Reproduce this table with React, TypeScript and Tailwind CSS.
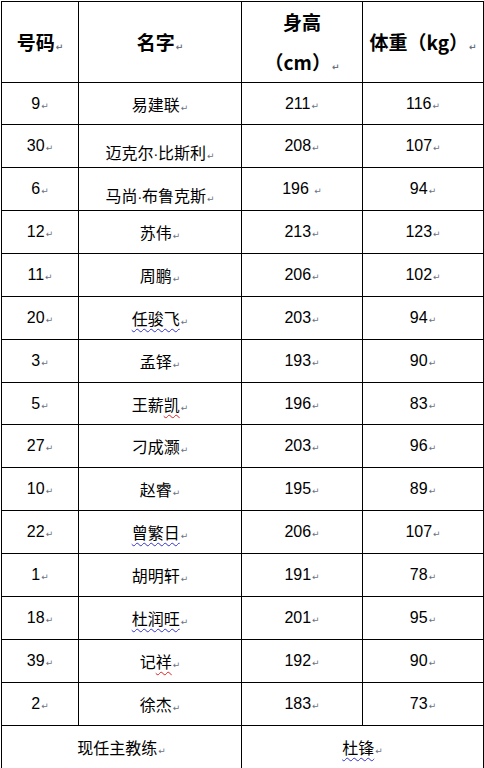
const players = [
  { no: "9", name: "易建联", height: "211", weight: "116" },
  { no: "30", name: "迈克尔·比斯利", height: "208", weight: "107", low: true },
  { no: "6", name: "马尚·布鲁克斯", height: "196 ", weight: "94", low: true },
  { no: "12", name: "苏伟", height: "213", weight: "123" },
  { no: "11", name: "周鹏", height: "206", weight: "102" },
  { no: "20", name: "任骏飞", height: "203", weight: "94", blue: "任骏飞" },
  { no: "3", name: "孟铎", height: "193", weight: "90" },
  { no: "5", name: "王薪凯", height: "196", weight: "83", red: "凯" },
  { no: "27", name: "刁成灏", height: "203", weight: "96" },
  { no: "10", name: "赵睿", height: "195", weight: "89" },
  { no: "22", name: "曾繁日", height: "206", weight: "107", blue: "曾繁日" },
  { no: "1", name: "胡明轩", height: "191", weight: "78" },
  { no: "18", name: "杜润旺", height: "201", weight: "95", blue: "杜润旺" },
  { no: "39", name: "记祥", height: "192", weight: "90", red: "祥" },
  { no: "2", name: "徐杰", height: "183", weight: "73" },
];

const cjk = "font-['Noto_Sans_CJK_SC',sans-serif]";
const num = "font-['Liberation_Sans','Noto_Sans_CJK_SC',sans-serif]";
const cell = "border border-black text-center align-middle p-0";
const wavyBlue = "underline decoration-wavy decoration-[#3333cc] decoration-1 underline-offset-[3px]";
const wavyRed = "underline decoration-wavy decoration-[#e02020] decoration-1 underline-offset-[3px]";

function Mark() {
  return (
    <span className="ml-px inline-block align-baseline text-[9px] leading-none text-gray-500 font-['DejaVu_Sans',sans-serif]">
      ↵
    </span>
  );
}

function Dotted({ text }: { text: string }) {
  const parts = text.split("·");
  return (
    <>
      {parts.map((part, i) => (
        <span key={i}>
          {i > 0 && <span className="font-['Liberation_Sans',sans-serif] text-[14px]">·</span>}
          {part}
        </span>
      ))}
    </>
  );
}

function Name({ name, blue, red }: { name: string; blue?: string; red?: string }) {
  if (blue) {
    return <span className={wavyBlue}>{name}</span>;
  }
  if (red) {
    const head = name.slice(0, name.length - red.length);
    return (
      <span>
        {head}
        <span className={wavyRed}>{red}</span>
      </span>
    );
  }
  return <Dotted text={name} />;
}

export default function App() {
  return (
    <div className="min-h-screen bg-white pl-px pt-px">
      <table className="border-collapse table-fixed w-[482px] text-black">
        <colgroup>
          <col className="w-[77px]" />
          <col className="w-[163px]" />
          <col className="w-[121px]" />
          <col className="w-[121px]" />
        </colgroup>
        <thead>
          <tr className="h-[81px]">
            <th className={`${cell} ${cjk} text-[19px] font-bold`}>
              号码<Mark />
            </th>
            <th className={`${cell} ${cjk} text-[19px] font-bold`}>
              名字<Mark />
            </th>
            <th className={`${cell} ${cjk} text-[19px] font-bold leading-[40px]`}>
              <span className="block">身高</span>
              <span className="block">
                （cm）<Mark />
              </span>
            </th>
            <th className={`${cell} ${cjk} text-[19px] font-bold`}>
              体重（kg）<Mark />
            </th>
          </tr>
        </thead>
        <tbody>
          {players.map((p, i) => (
            <tr key={p.no} className={i === 0 || i === 7 ? "h-[42px]" : "h-[43px]"}>
              <td className={`${cell} ${num} text-[16px]`}>
                {p.no}
                <Mark />
              </td>
              <td className={`${cell} ${cjk} text-[16px] ${p.low ? "pt-3" : ""}`}>
                <Name name={p.name} blue={p.blue} red={p.red} />
                <Mark />
              </td>
              <td className={`${cell} ${num} text-[16px] whitespace-pre`}>
                {p.height}
                <Mark />
              </td>
              <td className={`${cell} ${num} text-[16px]`}>
                {p.weight}
                <Mark />
              </td>
            </tr>
          ))}
          <tr className="h-[43px]">
            <td colSpan={2} className={`${cell} ${cjk} text-[16px]`}>
              现任主教练<Mark />
            </td>
            <td colSpan={2} className={`${cell} ${cjk} text-[16px]`}>
              <span className={wavyBlue}>杜锋</span>
              <Mark />
            </td>
          </tr>
        </tbody>
      </table>
    </div>
  );
}
